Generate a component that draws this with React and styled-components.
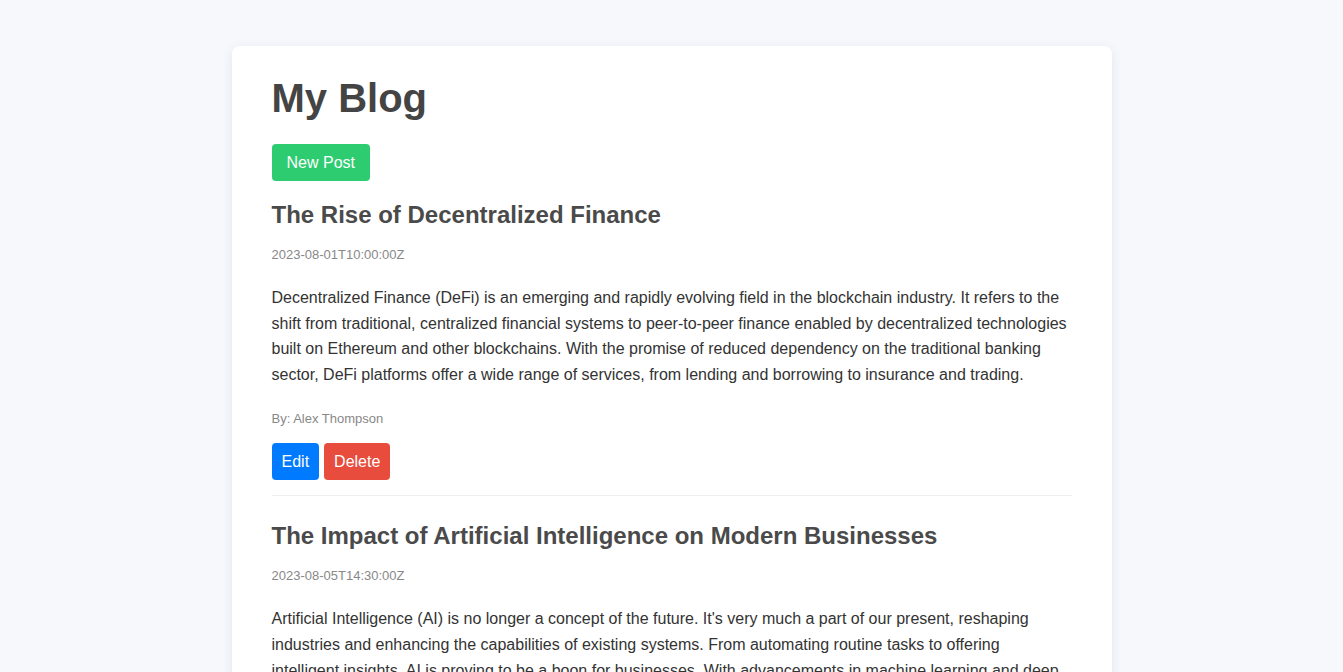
import React from "react";
import styled, { createGlobalStyle } from "styled-components";

const posts = [
  {
    id: 1,
    title: "The Rise of Decentralized Finance",
    date: "2023-08-01T10:00:00Z",
    content:
      "Decentralized Finance (DeFi) is an emerging and rapidly evolving field in the blockchain industry. It refers to the shift from traditional, centralized financial systems to peer-to-peer finance enabled by decentralized technologies built on Ethereum and other blockchains. With the promise of reduced dependency on the traditional banking sector, DeFi platforms offer a wide range of services, from lending and borrowing to insurance and trading.",
    author: "Alex Thompson",
  },
  {
    id: 2,
    title: "The Impact of Artificial Intelligence on Modern Businesses",
    date: "2023-08-05T14:30:00Z",
    content:
      "Artificial Intelligence (AI) is no longer a concept of the future. It's very much a part of our present, reshaping industries and enhancing the capabilities of existing systems. From automating routine tasks to offering intelligent insights, AI is proving to be a boon for businesses. With advancements in machine learning and deep learning, businesses can now analyze vast amounts of data to make informed decisions.",
    author: "Sarah Mitchell",
  },
];

const GlobalStyle = createGlobalStyle`
  body {
    margin: 0;
    background: #f7f8fc;
    font-family: "Liberation Sans", Arial, sans-serif;
    color: #333;
  }
`;

const Page = styled.div`
  padding: 46px 0 40px;
`;

const Card = styled.div`
  width: 800px;
  margin: 0 auto;
  padding: 30px 40px 20px;
  background: #fff;
  border-radius: 8px;
  box-shadow: 0 2px 12px rgba(20, 30, 80, 0.08);
`;

const Title = styled.h1`
  margin: 0 0 23px;
  font-size: 40px;
  font-weight: bold;
  color: #444;
`;

const Button = styled.button`
  font-family: "Liberation Sans", Arial, sans-serif;
  font-size: 16px;
  line-height: 19px;
  color: #fff;
  border: none;
  border-radius: 4px;
  padding: 9px ${(p) => (p.$wide ? "15px" : "10px")};
  margin-right: 5px;
  background: ${(p) => p.$bg};
  cursor: pointer;
`;

const Post = styled.article`
  padding: 20px 0 15px;
  border-bottom: 1px solid #eee;

  & + & {
    padding-top: 26px;
  }
`;

const PostTitle = styled.h2`
  margin: 0 0 18px;
  font-size: 24px;
  font-weight: bold;
  color: #4a4a4a;
`;

const Meta = styled.p`
  margin: 0;
  font-size: 13px;
  color: #888;
`;

const Body = styled.p`
  margin: 23px 0 24px;
  font-size: 16px;
  line-height: 1.6;
  color: #333;
`;

const Actions = styled.div`
  display: flex;
  margin-top: 17px;
`;

export default function App() {
  return (
    <>
      <GlobalStyle />
      <Page>
        <Card>
          <Title>My Blog</Title>
          <Button $wide $bg="#2ecc71">New Post</Button>
          {posts.map((post) => (
            <Post key={post.id}>
              <PostTitle>{post.title}</PostTitle>
              <Meta>{post.date}</Meta>
              <Body>{post.content}</Body>
              <Meta>By: {post.author}</Meta>
              <Actions>
                <Button $bg="#007bff">Edit</Button>
                <Button $bg="#e74c3c">Delete</Button>
              </Actions>
            </Post>
          ))}
        </Card>
      </Page>
    </>
  );
}
